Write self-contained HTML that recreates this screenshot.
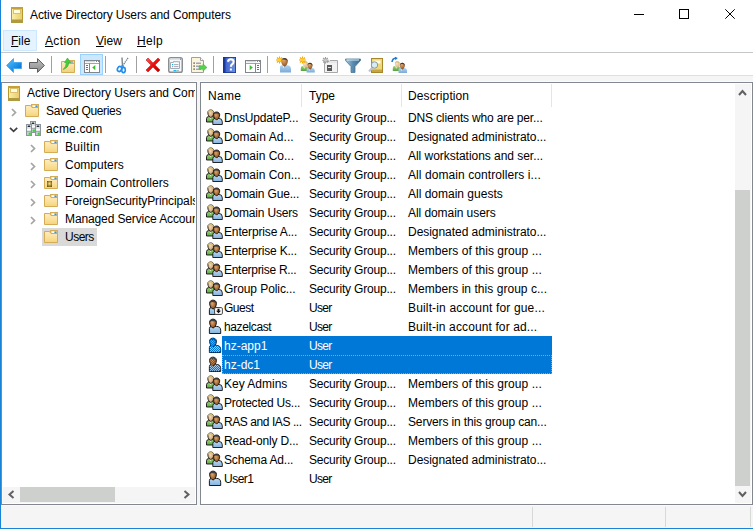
<!DOCTYPE html>
<html><head><meta charset="utf-8">
<style>
*{margin:0;padding:0;box-sizing:border-box}
html,body{width:753px;height:529px;overflow:hidden;background:#fff;font-family:"Liberation Sans",sans-serif;font-size:12px;color:#000}
.a{position:absolute}
#wb{left:0;top:0;width:1px;height:529px;background:#1883d7}
#bb{left:0;top:528px;width:753px;height:1px;background:#1883d7}
#title{left:30px;top:8px;white-space:nowrap;letter-spacing:-0.09px}
.menu{top:34px;white-space:nowrap}
.u{text-decoration:underline}
#mhl{left:3px;top:30px;width:34px;height:21px;background:#e5f3ff;border:1px solid #cce8ff}
#mline{left:1px;top:52px;width:752px;height:1px;background:#c4c8cb}
#tbline{left:1px;top:75px;width:752px;height:1px;background:#dde0dd}
#gray{left:1px;top:76px;width:752px;height:452px;background:#f5f5f5}
#wrow{left:1px;top:81px;width:752px;height:1px;background:#fbfbfb}
.sep{width:1px;height:17px;top:56px;background:#a0a0a0}
#tbhl{left:80px;top:54px;width:23px;height:21px;background:#cce8ff;border:1px solid #99d1ff}
#tree{left:1px;top:82px;width:196px;height:423px;background:#fff;border:1px solid #828790}
#list{left:200px;top:82px;width:553px;height:423px;background:#fff;border:1px solid #828790}
.t{white-space:nowrap;line-height:18px;height:18px}
.r{white-space:nowrap;line-height:19px;height:19px}
.hdr{top:84px;height:24px;line-height:24px;white-space:nowrap}
.hsep{top:84px;width:1px;height:23px;background:#e5e5e5}
.sb{background:#f5f5f5}
.thumb{background:#cdd0cd}
#status{left:1px;top:505px;width:752px;height:23px;background:#f5f5f5;border-top:1px solid #fafafa}
.ssep{top:507px;width:1px;height:20px;background:#d6d9d6}
.sel{background:#0078d7}
.selt{color:#fff}
svg{position:absolute;overflow:visible}
</style></head><body>
<div class="a" id="gray"></div>
<div class="a" id="wrow"></div>
<div class="a" id="wb"></div>

<!-- title bar -->
<svg style="left:11px;top:7px" width="12" height="16" viewBox="0 0 12 16">
 <defs><linearGradient id="book0" x1="0" y1="0" x2="1" y2="0"><stop offset="0" stop-color="#fbf0a8"/><stop offset="1" stop-color="#e8cc6a"/></linearGradient></defs>
 <rect x="0.5" y="0.5" width="11" height="15" fill="url(#book0)" stroke="#b8962e"/>
 <rect x="0" y="0" width="12" height="2" fill="#c4a238"/>
 <rect x="0" y="12.5" width="12" height="3.5" fill="#b09a40"/>
 <rect x="2.5" y="2.5" width="7" height="4" fill="#fffce0" stroke="#dcc070"/>
</svg>
<div class="a" id="title">Active Directory Users and Computers</div>
<svg style="left:634px;top:14px" width="10" height="1"><rect width="10" height="1" fill="#000"/></svg>
<svg style="left:679px;top:9px" width="10" height="10"><rect x="0.5" y="0.5" width="9" height="9" fill="none" stroke="#000"/></svg>
<svg style="left:725px;top:9px" width="10" height="10"><path d="M0.3 0.3L9.7 9.7M9.7 0.3L0.3 9.7" stroke="#000" stroke-width="1"/></svg>

<!-- menu -->
<div class="a" id="mhl"></div>
<div class="a menu" style="left:11px"><span class="u">F</span>ile</div>
<div class="a menu" style="left:45px;letter-spacing:0.35px"><span class="u">A</span>ction</div>
<div class="a menu" style="left:96px"><span class="u">V</span>iew</div>
<div class="a menu" style="left:137px;letter-spacing:0.3px"><span class="u">H</span>elp</div>
<div class="a" id="mline"></div>

<!-- toolbar -->
<div class="a" style="left:1px;top:53px;width:752px;height:22px;background:#fff"></div>
<div class="a" id="tbline"></div>
<div class="a" id="tbhl"></div>
<div class="a sep" style="left:51px"></div>
<div class="a sep" style="left:105px"></div>
<div class="a sep" style="left:136px"></div>
<div class="a sep" style="left:213px"></div>
<div class="a sep" style="left:267px"></div>
<!-- toolbar icons -->
<svg style="left:6px;top:57px" width="16" height="16" viewBox="0 0 16 16">
 <defs><linearGradient id="gb" x1="0" y1="0" x2="1" y2="1"><stop offset="0" stop-color="#5cc4ff"/><stop offset="0.6" stop-color="#1a90e8"/><stop offset="1" stop-color="#0062c8"/></linearGradient>
 <linearGradient id="gg" x1="0" y1="0" x2="0" y2="1"><stop offset="0" stop-color="#c0c0c0"/><stop offset="1" stop-color="#8a8a8a"/></linearGradient></defs>
 <path d="M0.6 8.5 L7.5 1.6 L7.5 5.5 L15.5 5.5 L15.5 11.5 L7.5 11.5 L7.5 15.4 Z" fill="url(#gb)" stroke="#4aa8ec" stroke-width="1"/>
</svg>
<svg style="left:29px;top:57px" width="16" height="16" viewBox="0 0 16 16">
 <path d="M15.4 8.5 L8.5 1.6 L8.5 5.5 L0.5 5.5 L0.5 11.5 L8.5 11.5 L8.5 15.4 Z" fill="url(#gg)" stroke="#5c5c5c" stroke-width="1"/>
</svg>
<svg style="left:61px;top:57px" width="15" height="16" viewBox="0 0 15 16">
 <rect x="7.5" y="3.5" width="6" height="3" fill="#f3da94" stroke="#d4ac55"/>
 <rect x="9" y="4.5" width="3" height="1" fill="#3a8ee0"/>
 <path d="M0.5 15.5 L0.5 4.5 L5.5 4.5 L7 6.5 L13.5 6.5 L13.5 15.5 Z" fill="url(#fold0)" stroke="#d4ac55"/>
 <path d="M2.2 12.5 Q5.5 9.5 5.2 5.5 L3.6 5.5 L6.5 1 L9.4 5.5 L7.6 5.5 Q7.8 10.5 2.2 12.5Z" fill="#3fd23a" stroke="#2aa82a" stroke-width="0.6"/>
 <defs><linearGradient id="fold0" x1="0" y1="0" x2="0" y2="1"><stop offset="0" stop-color="#fdeec0"/><stop offset="1" stop-color="#f2d07a"/></linearGradient></defs>
</svg>
<svg style="left:84px;top:60px" width="17" height="13" viewBox="0 0 17 13">
 <rect x="0.5" y="0.5" width="15" height="12" fill="#fff" stroke="#80868c"/>
 <rect x="1.5" y="1.3" width="9.5" height="0.9" fill="#c4cad0"/>
 <rect x="12" y="1" width="1" height="1" fill="#80868c"/><rect x="14" y="1" width="1" height="1" fill="#80868c"/>
 <rect x="1" y="3" width="14" height="1" fill="#a0a6ac"/>
 <rect x="5" y="3.5" width="1" height="9" fill="#80868c"/>
 <rect x="2" y="5" width="2" height="1" fill="#3a78c8"/><rect x="2" y="7" width="2" height="1" fill="#3a78c8"/><rect x="2" y="9" width="2" height="1" fill="#3a78c8"/>
 <path d="M11.3 5 L8.2 7.6 L11.3 10.2Z" fill="#3cbf2e"/>
</svg>
<svg style="left:117px;top:57px" width="12" height="16" viewBox="0 0 12 16">
 <path d="M5 0.5 L5.5 9" stroke="#7b8590" stroke-width="1.4"/>
 <path d="M11 1 L5.5 9" stroke="#7b8590" stroke-width="1.4" stroke-dasharray="1.3 0.7"/>
 <ellipse cx="2.5" cy="12" rx="2" ry="2.6" fill="none" stroke="#1f8ef0" stroke-width="1.6" transform="rotate(30 2.5 12)"/>
 <ellipse cx="6.5" cy="13" rx="1.8" ry="2.6" fill="none" stroke="#1f8ef0" stroke-width="1.6"/>
 <path d="M4 9.5 L5.5 8.5 L6.5 10" stroke="#1f8ef0" stroke-width="1.2" fill="none"/>
</svg>
<svg style="left:145px;top:57px" width="16" height="16" viewBox="0 0 16 16">
 <defs><linearGradient id="rx" x1="0" y1="0" x2="1" y2="1"><stop offset="0" stop-color="#ff5a5a"/><stop offset="0.5" stop-color="#e81010"/><stop offset="1" stop-color="#b00000"/></linearGradient></defs>
 <path d="M1 3 L3 1 L8 6 L13 1 L15 3 L10 8 L15 13 L13 15 L8 10 L3 15 L1 13 L6 8 Z" fill="url(#rx)" stroke="#d01010" stroke-width="0.6" stroke-linejoin="round"/>
</svg>
<svg style="left:168px;top:57px" width="15" height="16" viewBox="0 0 15 16">
 <rect x="0.75" y="0.75" width="13.5" height="14.5" rx="1.8" fill="#f6f8fa" stroke="#8a8f94" stroke-width="1.5"/>
 <rect x="1.5" y="1.5" width="12" height="1.5" fill="#dde3e8"/><rect x="12" y="1.5" width="1.2" height="1.2" fill="#5a7ab0"/>
 <path d="M2.5 11.5 V5.5 H5.5 V4.5 H11.5 V11.5 Z" fill="#fff" stroke="#a4acb4"/>
 <rect x="6.5" y="4.5" width="2" height="1" fill="#c8d0d8"/><rect x="9" y="4.5" width="2" height="1" fill="#c8d0d8"/>
 <rect x="4" y="7" width="1.2" height="1.2" fill="#10a8f0"/><rect x="6" y="7.2" width="4.5" height="0.9" fill="#98a0a8"/>
 <rect x="4" y="9" width="1.2" height="1.2" fill="#98a0a8"/><rect x="6" y="9.2" width="4.5" height="0.9" fill="#98a0a8"/>
 <rect x="5.5" y="13" width="3" height="1.3" fill="#18b8f8"/><rect x="9" y="13" width="2" height="1.3" fill="#b8b8b8"/>
</svg>
<svg style="left:191px;top:57px" width="17" height="16" viewBox="0 0 17 16">
 <path d="M0.5 0.5 L9.5 0.5 L12.5 3.5 L12.5 15.5 L0.5 15.5 Z" fill="#fbf5dc" stroke="#a0a09c"/>
 <path d="M9.5 0.5 L9.5 3.5 L12.5 3.5" fill="#fff" stroke="#a0a09c"/>
 <rect x="2.5" y="5.5" width="1.2" height="1.2" fill="#222"/><rect x="5" y="5.7" width="5" height="0.9" fill="#6a6ab8"/>
 <rect x="2.5" y="8.5" width="1.2" height="1.2" fill="#222"/><rect x="5" y="8.7" width="5" height="0.9" fill="#6a6ab8"/>
 <rect x="2.5" y="11.5" width="1.2" height="1.2" fill="#222"/><rect x="5" y="11.7" width="5" height="0.9" fill="#6a6ab8"/>
 <path d="M8 8.8 L12 8.8 L12 6.8 L16 10.5 L12 14.2 L12 12.2 L8 12.2 Z" fill="#58d050" stroke="#40b040" stroke-width="0.5"/>
</svg>
<svg style="left:223px;top:57px" width="14" height="16" viewBox="0 0 14 16">
 <defs><linearGradient id="hlp" x1="0" y1="0" x2="1" y2="0"><stop offset="0" stop-color="#3458c8"/><stop offset="1" stop-color="#6f95ea"/></linearGradient></defs>
 <rect x="0" y="0" width="13" height="16" fill="url(#hlp)"/>
 <rect x="0" y="0" width="2.5" height="16" fill="#1c3a9c"/>
 <rect x="0.4" y="0.4" width="12.2" height="15.2" fill="none" stroke="#1a3590" stroke-width="0.8"/>
 <path d="M5 4.8 Q5 2.2 7.8 2.2 Q10.6 2.2 10.6 4.8 Q10.6 6.4 9 7.4 Q7.9 8.1 7.9 9.8" fill="none" stroke="#8090b0" stroke-width="2" transform="translate(0.6 0.6)"/>
 <path d="M5 4.8 Q5 2.2 7.8 2.2 Q10.6 2.2 10.6 4.8 Q10.6 6.4 9 7.4 Q7.9 8.1 7.9 9.8" fill="none" stroke="#fff" stroke-width="2"/>
 <rect x="6.9" y="11.5" width="2" height="2" fill="#fff"/>
</svg>
<svg style="left:245px;top:60px" width="16" height="13" viewBox="0 0 16 13">
 <rect x="0.5" y="0.5" width="15" height="12" fill="#fff" stroke="#80868c"/>
 <rect x="1.5" y="1.3" width="9.5" height="0.9" fill="#c4cad0"/>
 <rect x="12" y="1" width="1" height="1" fill="#80868c"/><rect x="14" y="1" width="1" height="1" fill="#80868c"/>
 <rect x="1" y="3" width="14" height="1" fill="#a0a6ac"/>
 <rect x="10" y="3.5" width="1" height="9" fill="#80868c"/>
 <rect x="12" y="5" width="2" height="1" fill="#3a78c8"/><rect x="12" y="7" width="2" height="1" fill="#3a78c8"/><rect x="12" y="9" width="2" height="1" fill="#3a78c8"/>
 <path d="M4.7 5 L7.8 7.6 L4.7 10.2Z" fill="#3cbf2e"/>
</svg>
<svg style="left:275px;top:56px" width="17" height="17" viewBox="0 0 17 17"><defs>
<radialGradient id="tfd" cx="0.4" cy="0.3" r="0.8"><stop offset="0" stop-color="#e0a870"/><stop offset="0.6" stop-color="#a86e3a"/><stop offset="1" stop-color="#6a4018"/></radialGradient>
<radialGradient id="tfl" cx="0.4" cy="0.35" r="0.75"><stop offset="0" stop-color="#f8e6cc"/><stop offset="1" stop-color="#d8ae80"/></radialGradient>
<linearGradient id="tbb" x1="0" y1="0" x2="0" y2="1"><stop offset="0" stop-color="#b0d4f2"/><stop offset="1" stop-color="#7aaad8"/></linearGradient>
<linearGradient id="tgb" x1="0" y1="0" x2="0" y2="1"><stop offset="0" stop-color="#98d474"/><stop offset="1" stop-color="#58a23c"/></linearGradient>
</defs><path d="M5 16.5 L5 11.2 Q5 9.2 7 9.2 L12 9.2 Q16 9.2 16 13.2 L16 16.5 Z" fill="url(#tbb)"/><path d="M7.6 9.2 L8.5 12.2 L9.4 9.2Z" fill="#fff"/><path d="M6.20 4.99 C6.20 0.85 12.80 0.85 12.80 4.99 C12.80 8.12 10.69 10.50 9.50 10.50 C8.31 10.50 6.20 8.12 6.20 4.99Z" fill="url(#tfd)"/><path d="M6.20 5.28 C6.10 0.75 12.90 0.75 12.80 5.75 C12.30 3.09 6.70 2.90 6.20 5.28Z" fill="#3c3c3c"/><g stroke="#f7a800" stroke-width="1.1"><path d="M4.5 0.5 V7.5 M1.0 4 H8.0 M2.0 1.5 L7.0 6.5 M7.0 1.5 L2.0 6.5"/></g><circle cx="4.5" cy="4" r="1.7" fill="#ffd030"/></svg>
<svg style="left:298px;top:56px" width="17" height="17" viewBox="0 0 17 17"><path d="M2.8 15 L2.8 12 Q2.8 10 4.8 10 L8 10 Q10 10 10 12 L10 15 Z" fill="url(#tgb)"/><path d="M5.3 10 L6.2 13 L7.1000000000000005 10Z" fill="#fff"/><path d="M4.90 7.44 C4.90 4.35 9.70 4.35 9.70 7.44 C9.70 9.75 8.16 11.50 7.30 11.50 C6.44 11.50 4.90 9.75 4.90 7.44Z" fill="url(#tfl)"/><path d="M4.90 7.65 C4.80 4.25 9.80 4.25 9.70 8.00 C9.20 6.04 5.40 5.90 4.90 7.65Z" fill="#d2c070"/><path d="M8.5 16.5 L8.5 14 Q8.5 12 10.5 12 L13.8 12 Q16.8 12 16.8 15 L16.8 16.5 Z" fill="url(#tbb)"/><path d="M10.6 12 L11.5 15 L12.4 12Z" fill="#fff"/><path d="M9.50 9.15 C9.50 5.85 14.50 5.85 14.50 9.15 C14.50 11.62 12.90 13.50 12.00 13.50 C11.10 13.50 9.50 11.62 9.50 9.15Z" fill="url(#tfd)"/><path d="M9.50 9.38 C9.40 5.75 14.60 5.75 14.50 9.75 C14.00 7.65 10.00 7.50 9.50 9.38Z" fill="#3a3a3a"/><g stroke="#f7a800" stroke-width="1.1"><path d="M4.5 0.5 V7.5 M1.0 4 H8.0 M2.0 1.5 L7.0 6.5 M7.0 1.5 L2.0 6.5"/></g><circle cx="4.5" cy="4" r="1.7" fill="#ffd030"/></svg>
<svg style="left:322px;top:57px" width="16" height="16" viewBox="0 0 16 16">
 <path d="M2.5 4.5 L7 4.5 L8 3.5 L15.5 3.5 L15.5 15.5 L2.5 15.5 Z" fill="#e8e8e8" stroke="#a8a8a8"/>
 <rect x="3" y="6" width="12" height="9" fill="#f2f2f2"/>
 <rect x="5" y="8" width="5" height="6" fill="#5a5a5a"/><rect x="6" y="10" width="3" height="1" fill="#e0e0e0"/>
 <g stroke="#9a9a9a" stroke-width="1.1"><path d="M3.5 0 V6.5 M0.3 3.2 H6.7 M1.2 1 L5.8 5.5 M5.8 1 L1.2 5.5"/></g>
 <circle cx="3.5" cy="3.2" r="1.5" fill="#c8c8c8"/>
</svg>
<svg style="left:345px;top:58px" width="16" height="15" viewBox="0 0 16 15">
 <defs><linearGradient id="gf" x1="0" y1="0" x2="1" y2="0"><stop offset="0" stop-color="#a8c8e0"/><stop offset="0.5" stop-color="#5a8ab0"/><stop offset="1" stop-color="#3a6a90"/></linearGradient></defs>
 <path d="M0.5 1 L15.5 1 L15.5 2.5 L10 8.5 L10 14.5 L6 14.5 L6 8.5 L0.5 2.5 Z" fill="url(#gf)" stroke="#4a7898" stroke-width="0.8"/>
 <rect x="2" y="1.5" width="12" height="1" fill="#d8ecf8"/>
</svg>
<svg style="left:368px;top:58px" width="16" height="15" viewBox="0 0 16 15">
 <rect x="3.5" y="0.5" width="11" height="14" fill="#f0d77c" stroke="#a8862a"/>
 <rect x="4" y="11.5" width="10" height="2.5" fill="#c8a443"/>
 <rect x="5.5" y="2.5" width="7" height="3" fill="#fffce6"/>
 <path d="M1 13.5 L4.5 9.5" stroke="#c0c4c8" stroke-width="2"/>
 <circle cx="6.5" cy="7" r="3.2" fill="#d8ecf4" stroke="#8a9aa4" stroke-width="1"/>
</svg>
<svg style="left:391px;top:57px" width="17" height="16" viewBox="0 0 17 16"><path d="M1 5 Q1.5 1.2 5 1" fill="none" stroke="#1a78d0" stroke-width="1.5"/><path d="M4 -0.3 L6.8 1.1 L4.3 3.2Z" fill="#1a78d0"/><path d="M1.8 14 L1.8 11 Q1.8 9 3.8 9 L7 9 Q9 9 9 11 L9 14 Z" fill="url(#tgb)"/><path d="M4.3 9 L5.2 12 L6.1000000000000005 9Z" fill="#fff"/><path d="M3.90 6.44 C3.90 3.35 8.70 3.35 8.70 6.44 C8.70 8.75 7.16 10.50 6.30 10.50 C5.44 10.50 3.90 8.75 3.90 6.44Z" fill="url(#tfl)"/><path d="M3.90 6.65 C3.80 3.25 8.80 3.25 8.70 7.00 C8.20 5.04 4.40 4.90 3.90 6.65Z" fill="#d2c070"/><path d="M7.5 16 L7.5 13 Q7.5 11 9.5 11 L13 11 Q16 11 16 14 L16 16 Z" fill="url(#tbb)"/><path d="M9.799999999999999 11 L10.7 14 L11.6 11Z" fill="#fff"/><path d="M8.80 8.15 C8.80 4.85 13.80 4.85 13.80 8.15 C13.80 10.62 12.20 12.50 11.30 12.50 C10.40 12.50 8.80 10.62 8.80 8.15Z" fill="url(#tfd)"/><path d="M8.80 8.38 C8.70 4.75 13.90 4.75 13.80 8.75 C13.30 6.65 9.30 6.50 8.80 8.38Z" fill="#3a3a3a"/></svg>


<!-- tree pane -->
<div class="a" id="tree"></div>
<svg width="0" height="0" style="position:absolute"><defs>
<linearGradient id="fold" x1="0" y1="0" x2="0" y2="1"><stop offset="0" stop-color="#fdeec0"/><stop offset="1" stop-color="#f6d47c"/></linearGradient>
<linearGradient id="srv" x1="0" y1="0" x2="1" y2="0"><stop offset="0" stop-color="#b8c0c4"/><stop offset="0.5" stop-color="#d8dee0"/><stop offset="1" stop-color="#a8b0b4"/></linearGradient>
<linearGradient id="book" x1="0" y1="0" x2="1" y2="0"><stop offset="0" stop-color="#fbf0a8"/><stop offset="1" stop-color="#e8cc6a"/></linearGradient>
</defs></svg>
<svg style="left:8px;top:86px" width="12" height="15" viewBox="0 0 12 15">
 <rect x="0.5" y="0.5" width="11" height="14" fill="url(#book)" stroke="#b8962e"/>
 <rect x="0" y="0" width="12" height="2" fill="#c4a238"/>
 <rect x="0" y="12" width="12" height="3" fill="#b09a40"/>
 <rect x="2.5" y="2.5" width="7" height="4" fill="#fffce0" stroke="#dcc070"/>
</svg>
<div class="a t" style="left:27px;top:84px;width:168px;overflow:hidden">Active Directory Users and Computers</div>
<svg style="left:11px;top:108px" width="7" height="9" viewBox="0 0 7 9"><path d="M1 1L4.5 4.5L1 8" fill="none" stroke="#a2a5a2" stroke-width="1.7"/></svg>
<svg style="left:25px;top:104px" width="15" height="14" viewBox="0 0 15 14">
 <rect x="6.5" y="0.5" width="7" height="4" fill="#f3da94" stroke="#d4ac55"/>
 <rect x="8" y="1.5" width="2.5" height="1.5" fill="#fff"/><rect x="10.5" y="1.5" width="2" height="1.5" fill="#3a8ee0"/>
 <path d="M0.5 12.5 L0.5 1.5 L5.5 1.5 L7 3.5 L13.5 3.5 L13.5 12.5 Z" fill="url(#fold)" stroke="#d4ac55"/>
 
</svg>
<div class="a t" style="left:46px;top:102px;letter-spacing:-0.33px">Saved Queries</div>
<svg style="left:9px;top:127px" width="10" height="6" viewBox="0 0 10 6"><path d="M1 0.8L4.6 4.4L8.2 0.8" fill="none" stroke="#404040" stroke-width="1.7"/></svg>
<svg style="left:26px;top:121px" width="15" height="15" viewBox="0 0 15 15"><g transform="translate(4 0)">
 <rect x="0.5" y="0.5" width="5" height="11" fill="url(#srv)" stroke="#8d959a"/>
 <rect x="1" y="1" width="4" height="2.5" fill="#eef2f4"/><rect x="1.5" y="1.6" width="3" height="1.3" rx="0.6" fill="#1c2c34"/>
 <rect x="1" y="4.5" width="4" height="2" fill="#fbfcfc"/>
 <rect x="1" y="7" width="4" height="0.8" fill="#9aa2a8"/>
 <rect x="2.6" y="8.6" width="2.2" height="2.2" fill="#2ed82e"/>
</g><g transform="translate(0 3)">
 <rect x="0.5" y="0.5" width="5" height="11" fill="url(#srv)" stroke="#8d959a"/>
 <rect x="1" y="1" width="4" height="2.5" fill="#eef2f4"/><rect x="1.5" y="1.6" width="3" height="1.3" rx="0.6" fill="#1c2c34"/>
 <rect x="1" y="4.5" width="4" height="2" fill="#fbfcfc"/>
 <rect x="1" y="7" width="4" height="0.8" fill="#9aa2a8"/>
 <rect x="2.6" y="8.6" width="2.2" height="2.2" fill="#2ed82e"/>
</g><g transform="translate(9 3)">
 <rect x="0.5" y="0.5" width="5" height="11" fill="url(#srv)" stroke="#8d959a"/>
 <rect x="1" y="1" width="4" height="2.5" fill="#eef2f4"/><rect x="1.5" y="1.6" width="3" height="1.3" rx="0.6" fill="#1c2c34"/>
 <rect x="1" y="4.5" width="4" height="2" fill="#fbfcfc"/>
 <rect x="1" y="7" width="4" height="0.8" fill="#9aa2a8"/>
 <rect x="2.6" y="8.6" width="2.2" height="2.2" fill="#2ed82e"/>
</g></svg>
<div class="a t" style="left:46px;top:120px;letter-spacing:0.14px">acme.com</div>
<svg style="left:30px;top:144px" width="7" height="9" viewBox="0 0 7 9"><path d="M1 1L4.5 4.5L1 8" fill="none" stroke="#a2a5a2" stroke-width="1.7"/></svg>
<svg style="left:44px;top:140px" width="15" height="14" viewBox="0 0 15 14">
 <rect x="6.5" y="0.5" width="7" height="4" fill="#f3da94" stroke="#d4ac55"/>
 <rect x="8" y="1.5" width="2.5" height="1.5" fill="#fff"/><rect x="10.5" y="1.5" width="2" height="1.5" fill="#3a8ee0"/>
 <path d="M0.5 12.5 L0.5 1.5 L5.5 1.5 L7 3.5 L13.5 3.5 L13.5 12.5 Z" fill="url(#fold)" stroke="#d4ac55"/>
 
</svg>
<div class="a t" style="left:65px;top:138px;width:130px;overflow:hidden;letter-spacing:0.33px">Builtin</div>
<svg style="left:30px;top:162px" width="7" height="9" viewBox="0 0 7 9"><path d="M1 1L4.5 4.5L1 8" fill="none" stroke="#a2a5a2" stroke-width="1.7"/></svg>
<svg style="left:44px;top:158px" width="15" height="14" viewBox="0 0 15 14">
 <rect x="6.5" y="0.5" width="7" height="4" fill="#f3da94" stroke="#d4ac55"/>
 <rect x="8" y="1.5" width="2.5" height="1.5" fill="#fff"/><rect x="10.5" y="1.5" width="2" height="1.5" fill="#3a8ee0"/>
 <path d="M0.5 12.5 L0.5 1.5 L5.5 1.5 L7 3.5 L13.5 3.5 L13.5 12.5 Z" fill="url(#fold)" stroke="#d4ac55"/>
 
</svg>
<div class="a t" style="left:65px;top:156px;width:130px;overflow:hidden;letter-spacing:0px">Computers</div>
<svg style="left:30px;top:180px" width="7" height="9" viewBox="0 0 7 9"><path d="M1 1L4.5 4.5L1 8" fill="none" stroke="#a2a5a2" stroke-width="1.7"/></svg>
<svg style="left:44px;top:176px" width="15" height="14" viewBox="0 0 15 14">
 <rect x="6.5" y="0.5" width="7" height="4" fill="#f3da94" stroke="#d4ac55"/>
 <rect x="8" y="1.5" width="2.5" height="1.5" fill="#fff"/><rect x="10.5" y="1.5" width="2" height="1.5" fill="#3a8ee0"/>
 <path d="M0.5 12.5 L0.5 1.5 L5.5 1.5 L7 3.5 L13.5 3.5 L13.5 12.5 Z" fill="url(#fold)" stroke="#d4ac55"/>
 <defs><radialGradient id="dce" cx="0.5" cy="0.45" r="0.6"><stop offset="0" stop-color="#f0e8b0"/><stop offset="0.5" stop-color="#b89838"/><stop offset="1" stop-color="#6a5410"/></radialGradient></defs><rect x="3" y="5" width="5" height="6" fill="url(#dce)"/>
</svg>
<div class="a t" style="left:65px;top:174px;width:130px;overflow:hidden;letter-spacing:0.06px">Domain Controllers</div>
<svg style="left:30px;top:198px" width="7" height="9" viewBox="0 0 7 9"><path d="M1 1L4.5 4.5L1 8" fill="none" stroke="#a2a5a2" stroke-width="1.7"/></svg>
<svg style="left:44px;top:194px" width="15" height="14" viewBox="0 0 15 14">
 <rect x="6.5" y="0.5" width="7" height="4" fill="#f3da94" stroke="#d4ac55"/>
 <rect x="8" y="1.5" width="2.5" height="1.5" fill="#fff"/><rect x="10.5" y="1.5" width="2" height="1.5" fill="#3a8ee0"/>
 <path d="M0.5 12.5 L0.5 1.5 L5.5 1.5 L7 3.5 L13.5 3.5 L13.5 12.5 Z" fill="url(#fold)" stroke="#d4ac55"/>
 
</svg>
<div class="a t" style="left:65px;top:192px;width:130px;overflow:hidden;letter-spacing:-0.12px">ForeignSecurityPrincipals</div>
<svg style="left:30px;top:216px" width="7" height="9" viewBox="0 0 7 9"><path d="M1 1L4.5 4.5L1 8" fill="none" stroke="#a2a5a2" stroke-width="1.7"/></svg>
<svg style="left:44px;top:212px" width="15" height="14" viewBox="0 0 15 14">
 <rect x="6.5" y="0.5" width="7" height="4" fill="#f3da94" stroke="#d4ac55"/>
 <rect x="8" y="1.5" width="2.5" height="1.5" fill="#fff"/><rect x="10.5" y="1.5" width="2" height="1.5" fill="#3a8ee0"/>
 <path d="M0.5 12.5 L0.5 1.5 L5.5 1.5 L7 3.5 L13.5 3.5 L13.5 12.5 Z" fill="url(#fold)" stroke="#d4ac55"/>
 
</svg>
<div class="a t" style="left:65px;top:210px;width:130px;overflow:hidden;letter-spacing:-0.12px">Managed Service Accounts</div>
<div class="a" style="left:42px;top:228px;width:55px;height:18px;background:#d9d9d9"></div>
<svg style="left:44px;top:230px" width="15" height="14" viewBox="0 0 15 14">
 <rect x="6.5" y="0.5" width="7" height="4" fill="#f3da94" stroke="#d4ac55"/>
 <rect x="8" y="1.5" width="2.5" height="1.5" fill="#fff"/><rect x="10.5" y="1.5" width="2" height="1.5" fill="#3a8ee0"/>
 <path d="M0.5 12.5 L0.5 1.5 L5.5 1.5 L7 3.5 L13.5 3.5 L13.5 12.5 Z" fill="url(#fold)" stroke="#d4ac55"/>
 
</svg>
<div class="a t" style="left:65px;top:228px;width:130px;overflow:hidden;letter-spacing:-0.5px">Users</div>
<div class="a sb" style="left:3px;top:487px;width:192px;height:16px"></div>
<div class="a thumb" style="left:20px;top:487px;width:95px;height:15px"></div>
<svg style="left:7px;top:490px" width="8" height="9" viewBox="0 0 8 9"><path d="M6.5 1L2.5 4.5L6.5 8" fill="none" stroke="#606060" stroke-width="2"/></svg>
<svg style="left:183px;top:490px" width="8" height="9" viewBox="0 0 8 9"><path d="M1.5 1L5.5 4.5L1.5 8" fill="none" stroke="#606060" stroke-width="2"/></svg>
<!-- list pane -->
<div class="a" id="list"></div>
<svg width="0" height="0" style="position:absolute"><defs>
<radialGradient id="fl" cx="0.4" cy="0.4" r="0.7"><stop offset="0" stop-color="#f4dcb8"/><stop offset="1" stop-color="#c09060"/></radialGradient>
<radialGradient id="fd" cx="0.4" cy="0.4" r="0.7"><stop offset="0" stop-color="#dca470"/><stop offset="0.6" stop-color="#a26834"/><stop offset="1" stop-color="#603814"/></radialGradient>
<linearGradient id="bb" x1="0" y1="0" x2="0" y2="1"><stop offset="0" stop-color="#b8d8f4"/><stop offset="1" stop-color="#84b4e0"/></linearGradient>
<linearGradient id="gb2" x1="0" y1="0" x2="0" y2="1"><stop offset="0" stop-color="#9ad676"/><stop offset="1" stop-color="#5aa83e"/></linearGradient>
<g id="ig"><path d="M0.5 14 L0.5 10.8 Q0.5 8.6 2.7 8.6 L6.3999999999999995 8.6 Q8.6 8.6 8.6 10.8 L8.6 14 Z" fill="url(#gb2)" stroke="#111" stroke-width="0.9"/><path d="M3.6999999999999997 8.6 L4.6 11.6 L5.5 8.6Z" fill="#fff"/><path d="M1.80 4.64 C1.80 1.05 7.80 1.05 7.80 4.64 C7.80 7.35 5.88 9.40 4.80 9.40 C3.72 9.40 1.80 7.35 1.80 4.64Z" fill="url(#fl)" stroke="#111" stroke-width="0.85"/><path d="M1.80 4.89 C1.70 0.95 7.90 0.95 7.80 5.30 C7.30 3.00 2.30 2.84 1.80 4.89Z" fill="#d8c878"/><path d="M6.8 16.5 L6.8 12.600000000000001 Q6.8 10.4 9.0 10.4 L12.8 10.4 Q16.3 10.4 16.3 13.9 L16.3 16.5 Z" fill="url(#bb)" stroke="#111" stroke-width="0.9"/><path d="M9.5 10.4 L10.4 13.4 L11.3 10.4Z" fill="#fff"/><path d="M7.50 6.81 C7.50 3.05 13.70 3.05 13.70 6.81 C13.70 9.65 11.72 11.80 10.60 11.80 C9.48 11.80 7.50 9.65 7.50 6.81Z" fill="url(#fd)" stroke="#111" stroke-width="0.85"/><path d="M7.50 7.07 C7.40 2.95 13.80 2.95 13.70 7.50 C13.20 5.09 8.00 4.92 7.50 7.07Z" fill="#383838"/></g>
<g id="iu"><path d="M3.4 16.5 L3.4 11.600000000000001 Q3.4 9.4 5.6 9.4 L10.5 9.4 Q14.7 9.4 14.7 13.600000000000001 L14.7 16.5 Z" fill="url(#bb)" stroke="#111" stroke-width="0.95"/><path d="M5.699999999999999 9.4 L6.6 12.4 L7.5 9.4Z" fill="#fff"/><path d="M3.60 5.32 C3.60 1.05 10.40 1.05 10.40 5.32 C10.40 8.55 8.22 11.00 7.00 11.00 C5.78 11.00 3.60 8.55 3.60 5.32Z" fill="url(#fd)" stroke="#111" stroke-width="0.95"/><path d="M3.60 5.61 C3.50 0.95 10.50 0.95 10.40 6.10 C9.90 3.36 4.10 3.16 3.60 5.61Z" fill="#404040"/></g>
<g id="iguest">
 <use href="#iu"/>
 <rect x="8.6" y="9.6" width="7.8" height="6.8" rx="1.2" fill="#fff" stroke="#333" stroke-width="0.9"/>
 <path d="M11.5 10.8 H13.5 V12.8 H15 L12.5 15.3 L10 12.8 H11.5Z" fill="#111"/>
</g>
<pattern id="dith" width="2" height="2" patternUnits="userSpaceOnUse"><rect width="1" height="1" fill="#0078d7"/><rect x="1" y="1" width="1" height="1" fill="#0078d7"/></pattern>
<clipPath id="cu"><path d="M3.4 16.5 L3.4 11.600000000000001 Q3.4 9.4 5.6 9.4 L10.5 9.4 Q14.7 9.4 14.7 13.600000000000001 L14.7 16.5 Z"/><path d="M3.60 5.32 C3.60 1.05 10.40 1.05 10.40 5.32 C10.40 8.55 8.22 11.00 7.00 11.00 C5.78 11.00 3.60 8.55 3.60 5.32Z"/></clipPath>
<g id="isu">
 <use href="#iu"/>
 <rect x="0" y="0" width="17" height="17" fill="url(#dith)" clip-path="url(#cu)"/>
</g>
</defs></svg>

<div class="a hdr" style="left:208px;letter-spacing:0.3px">Name</div>
<div class="a hsep" style="left:301px"></div>
<div class="a hdr" style="left:309px">Type</div>
<div class="a hsep" style="left:401px"></div>
<div class="a hdr" style="left:408px;letter-spacing:0.1px">Description</div>
<div class="a hsep" style="left:551px"></div>
<svg style="left:206px;top:108px" width="16" height="17"><use href="#ig"/></svg>
<div class="a r" style="left:224px;top:109px;letter-spacing:-0.167px">DnsUpdateP...</div>
<div class="a r" style="left:309px;top:109px;letter-spacing:-0.188px">Security Group...</div>
<div class="a r" style="left:408px;top:109px;letter-spacing:-0.160px">DNS clients who are per...</div>
<svg style="left:206px;top:127px" width="16" height="17"><use href="#ig"/></svg>
<div class="a r" style="left:224px;top:128px;letter-spacing:0.091px">Domain Ad...</div>
<div class="a r" style="left:309px;top:128px;letter-spacing:-0.188px">Security Group...</div>
<div class="a r" style="left:408px;top:128px;letter-spacing:-0.040px">Designated administrato...</div>
<svg style="left:206px;top:146px" width="16" height="17"><use href="#ig"/></svg>
<div class="a r" style="left:224px;top:147px">Domain Co...</div>
<div class="a r" style="left:309px;top:147px;letter-spacing:-0.188px">Security Group...</div>
<div class="a r" style="left:408px;top:147px;letter-spacing:-0.038px">All workstations and ser...</div>
<svg style="left:206px;top:165px" width="16" height="17"><use href="#ig"/></svg>
<div class="a r" style="left:224px;top:166px">Domain Con...</div>
<div class="a r" style="left:309px;top:166px;letter-spacing:-0.188px">Security Group...</div>
<div class="a r" style="left:408px;top:166px;letter-spacing:0.077px">All domain controllers i...</div>
<svg style="left:206px;top:184px" width="16" height="17"><use href="#ig"/></svg>
<div class="a r" style="left:224px;top:185px;letter-spacing:-0.167px">Domain Gue...</div>
<div class="a r" style="left:309px;top:185px;letter-spacing:-0.188px">Security Group...</div>
<div class="a r" style="left:408px;top:185px">All domain guests</div>
<svg style="left:206px;top:203px" width="16" height="17"><use href="#ig"/></svg>
<div class="a r" style="left:224px;top:204px;letter-spacing:-0.182px">Domain Users</div>
<div class="a r" style="left:309px;top:204px;letter-spacing:-0.188px">Security Group...</div>
<div class="a r" style="left:408px;top:204px;letter-spacing:-0.067px">All domain users</div>
<svg style="left:206px;top:222px" width="16" height="17"><use href="#ig"/></svg>
<div class="a r" style="left:224px;top:223px;letter-spacing:-0.143px">Enterprise A...</div>
<div class="a r" style="left:309px;top:223px;letter-spacing:-0.188px">Security Group...</div>
<div class="a r" style="left:408px;top:223px;letter-spacing:-0.040px">Designated administrato...</div>
<svg style="left:206px;top:241px" width="16" height="17"><use href="#ig"/></svg>
<div class="a r" style="left:224px;top:242px;letter-spacing:-0.214px">Enterprise K...</div>
<div class="a r" style="left:309px;top:242px;letter-spacing:-0.188px">Security Group...</div>
<div class="a r" style="left:408px;top:242px;letter-spacing:0.042px">Members of this group ...</div>
<svg style="left:206px;top:260px" width="16" height="17"><use href="#ig"/></svg>
<div class="a r" style="left:224px;top:261px;letter-spacing:-0.286px">Enterprise R...</div>
<div class="a r" style="left:309px;top:261px;letter-spacing:-0.188px">Security Group...</div>
<div class="a r" style="left:408px;top:261px;letter-spacing:0.042px">Members of this group ...</div>
<svg style="left:206px;top:279px" width="16" height="17"><use href="#ig"/></svg>
<div class="a r" style="left:224px;top:280px;letter-spacing:-0.077px">Group Polic...</div>
<div class="a r" style="left:309px;top:280px;letter-spacing:-0.188px">Security Group...</div>
<div class="a r" style="left:408px;top:280px;letter-spacing:0.040px">Members in this group c...</div>
<svg style="left:206px;top:298px" width="16" height="17"><use href="#iguest"/></svg>
<div class="a r" style="left:224px;top:299px;letter-spacing:-0.500px">Guest</div>
<div class="a r" style="left:309px;top:299px;letter-spacing:-0.667px">User</div>
<div class="a r" style="left:408px;top:299px;letter-spacing:0.154px">Built-in account for gue...</div>
<svg style="left:206px;top:317px" width="16" height="17"><use href="#iu"/></svg>
<div class="a r" style="left:224px;top:318px;letter-spacing:-0.375px">hazelcast</div>
<div class="a r" style="left:309px;top:318px;letter-spacing:-0.667px">User</div>
<div class="a r" style="left:408px;top:318px;letter-spacing:0.120px">Built-in account for ad...</div>
<div class="a sel" style="left:222px;top:336px;width:330px;height:19px"></div>
<svg style="left:206px;top:336px" width="16" height="17"><use href="#isu"/></svg>
<div class="a r selt" style="left:224px;top:337px">hz-app1</div>
<div class="a r selt" style="left:309px;top:337px;letter-spacing:-0.667px">User</div>
<div class="a sel" style="left:222px;top:355px;width:330px;height:19px"></div>
<div class="a" style="left:222px;top:355px;width:330px;height:19px;border:1px dotted #ff8728"></div>
<svg style="left:206px;top:355px" width="16" height="17"><use href="#isu"/></svg>
<div class="a r selt" style="left:224px;top:356px">hz-dc1</div>
<div class="a r selt" style="left:309px;top:356px;letter-spacing:-0.667px">User</div>
<svg style="left:206px;top:374px" width="16" height="17"><use href="#ig"/></svg>
<div class="a r" style="left:224px;top:375px">Key Admins</div>
<div class="a r" style="left:309px;top:375px;letter-spacing:-0.188px">Security Group...</div>
<div class="a r" style="left:408px;top:375px;letter-spacing:0.042px">Members of this group ...</div>
<svg style="left:206px;top:393px" width="16" height="17"><use href="#ig"/></svg>
<div class="a r" style="left:224px;top:394px;letter-spacing:-0.214px">Protected Us...</div>
<div class="a r" style="left:309px;top:394px;letter-spacing:-0.188px">Security Group...</div>
<div class="a r" style="left:408px;top:394px;letter-spacing:0.042px">Members of this group ...</div>
<svg style="left:206px;top:412px" width="16" height="17"><use href="#ig"/></svg>
<div class="a r" style="left:224px;top:413px;letter-spacing:-0.429px">RAS and IAS ...</div>
<div class="a r" style="left:309px;top:413px;letter-spacing:-0.188px">Security Group...</div>
<div class="a r" style="left:408px;top:413px;letter-spacing:-0.148px">Servers in this group can...</div>
<svg style="left:206px;top:431px" width="16" height="17"><use href="#ig"/></svg>
<div class="a r" style="left:224px;top:432px;letter-spacing:-0.154px">Read-only D...</div>
<div class="a r" style="left:309px;top:432px;letter-spacing:-0.188px">Security Group...</div>
<div class="a r" style="left:408px;top:432px;letter-spacing:0.042px">Members of this group ...</div>
<svg style="left:206px;top:450px" width="16" height="17"><use href="#ig"/></svg>
<div class="a r" style="left:224px;top:451px;letter-spacing:-0.182px">Schema Ad...</div>
<div class="a r" style="left:309px;top:451px;letter-spacing:-0.188px">Security Group...</div>
<div class="a r" style="left:408px;top:451px;letter-spacing:-0.040px">Designated administrato...</div>
<svg style="left:206px;top:469px" width="16" height="17"><use href="#iu"/></svg>
<div class="a r" style="left:224px;top:470px;letter-spacing:-0.500px">User1</div>
<div class="a r" style="left:309px;top:470px;letter-spacing:-0.667px">User</div>
<div class="a sb" style="left:735px;top:84px;width:16px;height:419px"></div>
<div class="a thumb" style="left:735px;top:190px;width:15px;height:296px"></div>
<svg style="left:738px;top:89px" width="9" height="7" viewBox="0 0 9 7"><path d="M1 6L4.5 2L8 6" fill="none" stroke="#606060" stroke-width="2"/></svg>
<svg style="left:738px;top:491px" width="9" height="7" viewBox="0 0 9 7"><path d="M1 1L4.5 5L8 1" fill="none" stroke="#606060" stroke-width="2"/></svg>

<!-- status -->
<div class="a" id="status"></div>
<div class="a ssep" style="left:532px"></div>
<div class="a ssep" style="left:665px"></div>
<div class="a ssep" style="left:750px"></div>
<div class="a" id="bb"></div>
</body></html>
